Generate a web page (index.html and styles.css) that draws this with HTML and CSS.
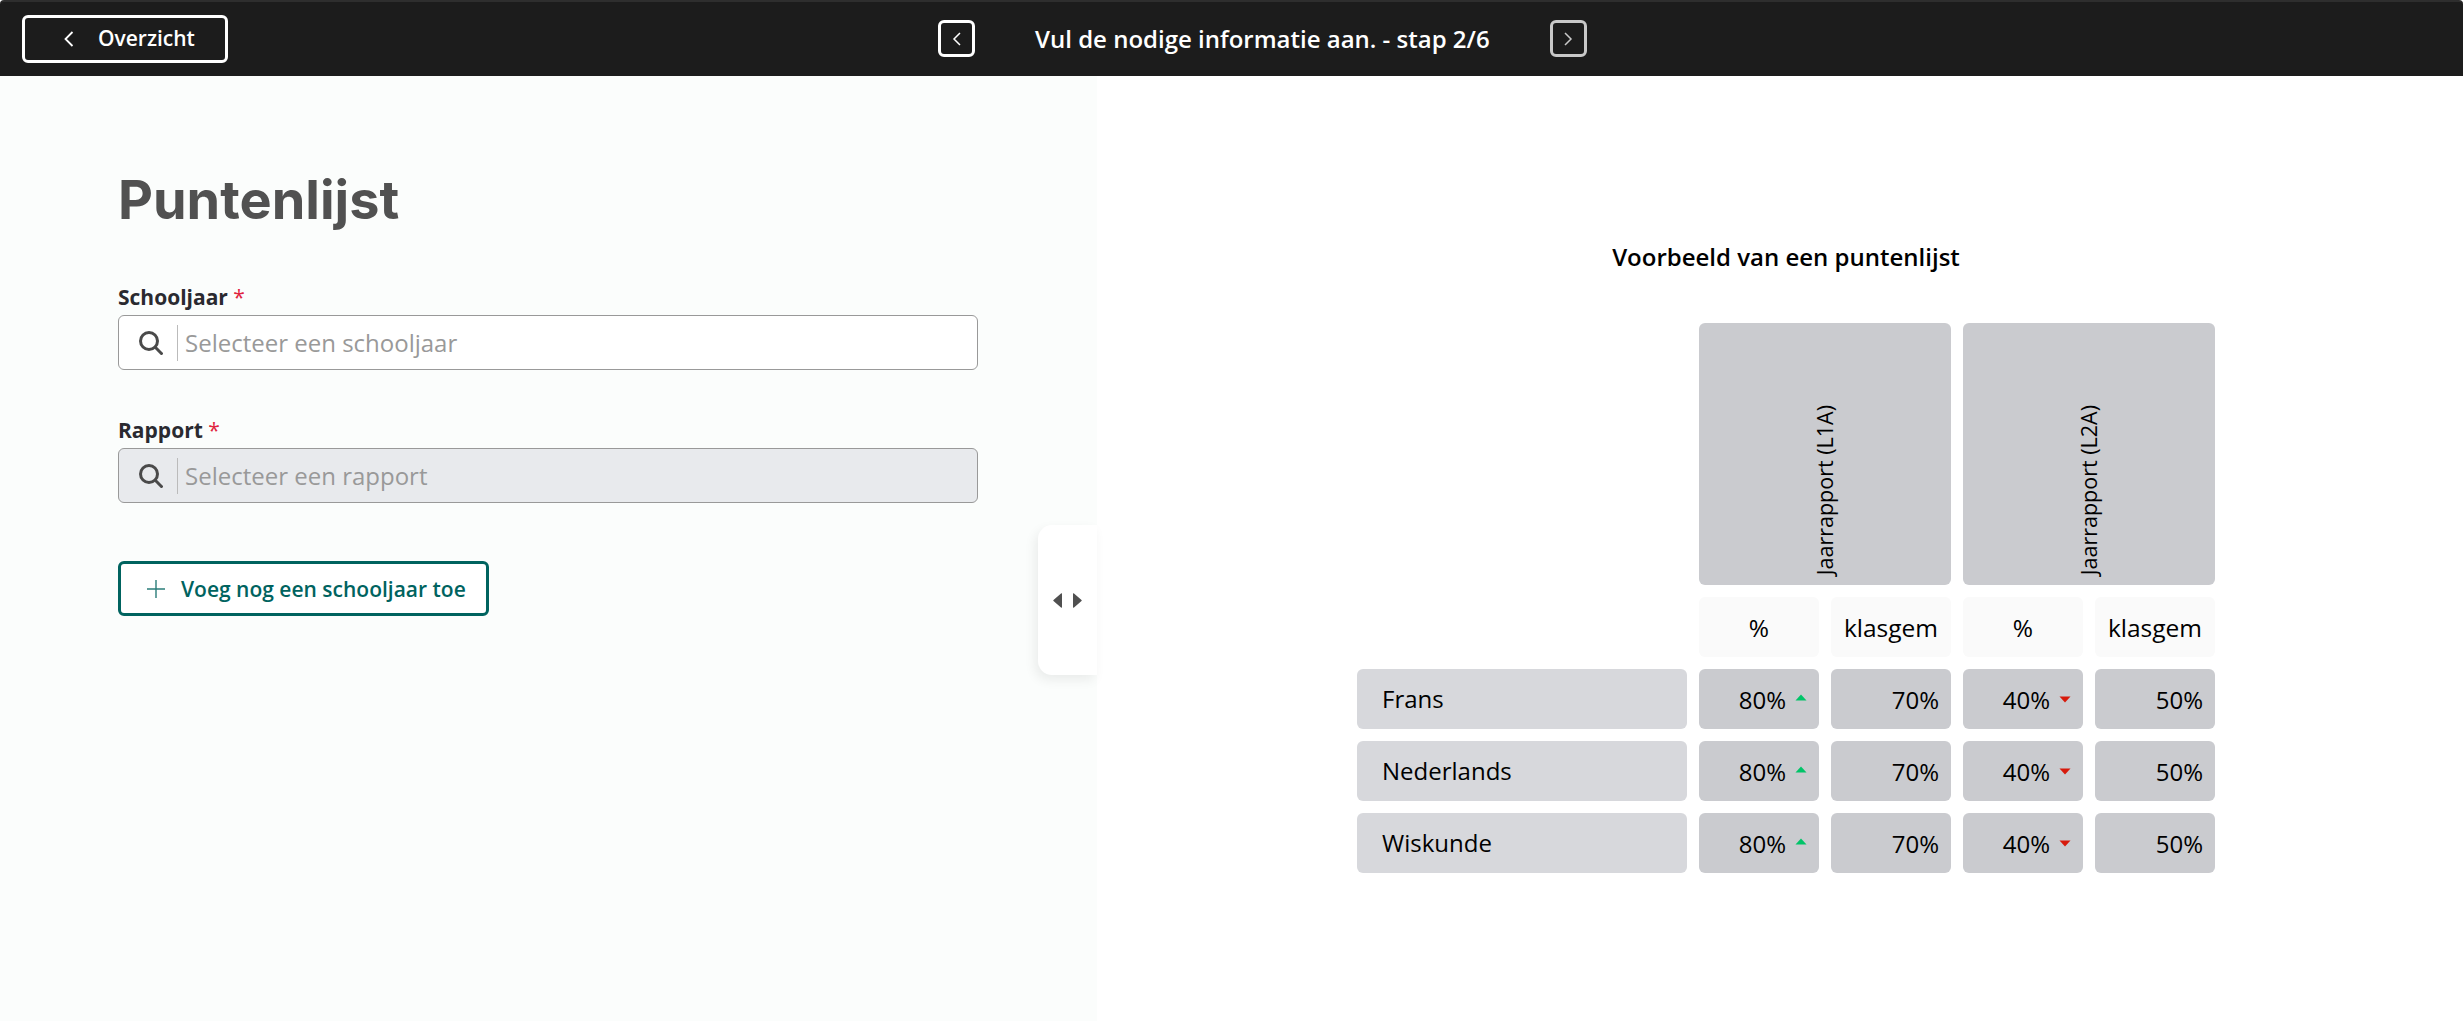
FILE: index.html
```html
<!DOCTYPE html>
<html lang="nl">
<head>
<meta charset="utf-8">
<title>Puntenlijst</title>
<link rel="stylesheet" href="styles.css">
</head>
<body>
<header class="topbar">
  <button class="back-btn">
    <svg class="chev" viewBox="0 0 10 16"><path d="M8.500 1 1.500 8l7 7"/></svg>
    <span>Overzicht</span>
  </button>
  <nav class="stepper">
    <button class="step-btn"><svg class="chev-sm" viewBox="0 0 10 16"><path d="M8 2 2 8l6 6"/></svg></button>
    <span class="step-title">Vul de nodige informatie aan. - stap 2/6</span>
    <button class="step-btn muted"><svg class="chev-sm" viewBox="0 0 10 16"><path d="M2 2l6 6-6 6"/></svg></button>
  </nav>
</header>
<main class="split">
  <section class="form-pane">
    <h1 class="title">Puntenlijst</h1>
    <div class="field">
      <label class="label">Schooljaar <span class="req">*</span></label>
      <div class="select">
        <svg class="search" viewBox="0 0 24 24"><circle cx="10" cy="10" r="8.500"/><path d="M16.500 16.500l7 7"/></svg>
        <span class="placeholder">Selecteer een schooljaar</span>
      </div>
    </div>
    <div class="field">
      <label class="label">Rapport <span class="req">*</span></label>
      <div class="select disabled">
        <svg class="search" viewBox="0 0 24 24"><circle cx="10" cy="10" r="8.500"/><path d="M16.500 16.500l7 7"/></svg>
        <span class="placeholder">Selecteer een rapport</span>
      </div>
    </div>
    <button class="add-btn">
      <svg class="plus" viewBox="0 0 18 18"><path d="M9 0v18M0 9h18"/></svg>
      <span>Voeg nog een schooljaar toe</span>
    </button>
    <div class="handle">
      <svg class="handle-arrows" viewBox="0 0 29 15"><path d="M9 .8v13.400a.6.6 0 0 1-1 .4L.5 8a.7.7 0 0 1 0-1L8 .4a.6.6 0 0 1 1 .4ZM20 .8v13.400a.6.6 0 0 0 1 .4L28.500 8a.7.7 0 0 0 0-1L21 .4a.6.6 0 0 0-1 .4Z"/></svg>
    </div>
  </section>
  <section class="preview-pane">
    <h2 class="preview-title">Voorbeeld van een puntenlijst</h2>
    <div class="grid">
      <div class="blank"></div>
      <div class="cell report"><span>Jaarrapport (L1A)</span></div>
      <div class="cell report"><span>Jaarrapport (L2A)</span></div>

      <div class="blank"></div>
      <div class="cell head">%</div>
      <div class="cell head">klasgem</div>
      <div class="cell head">%</div>
      <div class="cell head">klasgem</div>

      <div class="cell name">Frans</div>
      <div class="cell val">80%<svg class="tri up" viewBox="0 0 12 7"><path d="M6 .6 11.500 6.400H.5Z"/></svg></div>
      <div class="cell val">70%</div>
      <div class="cell val">40%<svg class="tri down" viewBox="0 0 12 7"><path d="M.5.6h11L6 6.400Z"/></svg></div>
      <div class="cell val">50%</div>

      <div class="cell name">Nederlands</div>
      <div class="cell val">80%<svg class="tri up" viewBox="0 0 12 7"><path d="M6 .6 11.500 6.400H.5Z"/></svg></div>
      <div class="cell val">70%</div>
      <div class="cell val">40%<svg class="tri down" viewBox="0 0 12 7"><path d="M.5.6h11L6 6.400Z"/></svg></div>
      <div class="cell val">50%</div>

      <div class="cell name">Wiskunde</div>
      <div class="cell val">80%<svg class="tri up" viewBox="0 0 12 7"><path d="M6 .6 11.500 6.400H.5Z"/></svg></div>
      <div class="cell val">70%</div>
      <div class="cell val">40%<svg class="tri down" viewBox="0 0 12 7"><path d="M.5.6h11L6 6.400Z"/></svg></div>
      <div class="cell val">50%</div>
    </div>
  </section>
</main>
</body>
</html>
```
FILE: styles.css
```css
* { box-sizing: border-box; }
html, body { margin: 0; height: 100%; }
body {
  font-family: "Open Sans", sans-serif;
  color: #000;
  background: #fff;
  display: flex;
  flex-direction: column;
  height: 1021px;
  overflow: hidden;
}
button { font-family: inherit; background: none; cursor: pointer; padding: 0; }

.topbar {
  height: 76px;
  flex: none;
  background: #1c1c1c;
  border-top: 2px solid #2e2e2e;
  position: relative;
  display: flex;
  align-items: center;
  padding-left: 22px;
  border-radius: 4px 4px 0 0;
}
.back-btn {
  width: 206px;
  height: 48px;
  margin-top: -1px;
  border: 3px solid #fff;
  border-radius: 6px;
  color: #fff;
  font-size: 21px;
  font-weight: 600;
  display: flex;
  align-items: center;
  padding: 0 0 2px 39px;
  gap: 24px;
}
.chev { width: 10px; height: 16px; fill: none; stroke: #fff; stroke-width: 1.8; margin-top: 2px; }
.stepper {
  position: absolute;
  left: 938px;
  top: 18px;
  display: flex;
  align-items: center;
  gap: 60px;
}
.step-btn {
  width: 37px;
  height: 37px;
  border: 3px solid #fff;
  border-radius: 6px;
  display: flex;
  align-items: center;
  justify-content: center;
}
.step-btn.muted { border-color: #c8c8c8; }
.chev-sm { width: 10px; height: 16px; fill: none; stroke: #fff; stroke-width: 1.5; }
.muted .chev-sm { stroke: #c8c8c8; }
.step-title { color: #fff; font-size: 24px; font-weight: 600; white-space: nowrap; }

.split { flex: 1; display: flex; min-height: 0; }
.form-pane {
  width: 1097px;
  flex: none;
  background: #fbfdfc;
  padding: 92px 119px 0 118px;
  position: relative;
}
.title {
  margin: 0 0 51px;
  font-family: Inter, sans-serif;
  font-size: 54px;
  font-weight: 700;
  line-height: 64px;
  color: #515151;
}
.field { margin-bottom: 46px; }
.label {
  display: block;
  font-size: 21px;
  font-weight: 700;
  line-height: 28px;
  color: #2a2a30;
  margin-bottom: 4px;
}
.req { color: #e0243f; font-weight: 400; }
.select {
  height: 55px;
  border: 1px solid #999;
  border-radius: 6px;
  background: #fff;
  display: flex;
  align-items: center;
  padding-left: 20px;
}
.select.disabled { background: #e8eaed; }
.search { width: 24px; height: 24px; fill: none; stroke: #4a4a4a; stroke-width: 3; flex: none; }
.placeholder {
  margin-left: 14px;
  border-left: 1px solid #bbb;
  padding-left: 7px;
  height: 36px;
  line-height: 35px;
  font-size: 24px;
  color: #999;
}
.add-btn {
  margin-top: 58px;
  width: 371px;
  height: 55px;
  border: 3px solid #00635f;
  border-radius: 6px;
  background: #fff;
  color: #00635f;
  font-size: 21px;
  font-weight: 600;
  display: flex;
  align-items: center;
  padding-left: 26px;
  gap: 16px;
}
.plus { width: 18px; height: 18px; fill: none; stroke: #2b7d79; stroke-width: 1.4; }
.handle {
  position: absolute;
  right: 0;
  top: 449px;
  width: 59px;
  height: 150px;
  background: #fff;
  border-radius: 14px 0 0 14px;
  box-shadow: -3px 5px 12px rgba(0,0,0,.07);
  display: flex;
  align-items: center;
  justify-content: center;
}
.handle-arrows { width: 29px; height: 15px; fill: #505050; margin-left: -1px; }

.preview-pane {
  flex: 1;
  display: flex;
  flex-direction: column;
  padding: 165px 0 0 260px;
}
.preview-title {
  width: 858px;
  margin: 0 0 50px;
  text-align: center;
  font-size: 24px;
  font-weight: 600;
  line-height: 32px;
}
.grid {
  display: grid;
  grid-template-columns: 330px 120px 120px 120px 120px;
  grid-template-rows: 262px 60px 60px 60px 60px;
  gap: 12px;
  width: 858px;
  font-size: 24px;
}
.cell { border-radius: 6px; display: flex; align-items: center; background: #cacbcf; }
.report {
  grid-column: span 2;
  align-items: flex-end;
  justify-content: center;
  padding-bottom: 10px;
}
.report span {
  writing-mode: vertical-rl;
  transform: rotate(180deg);
  font-size: 21.500px;
  line-height: 24px;
}
.head { background: #fafafa; justify-content: center; font-size: 24.500px; }
.name { background: #d7d8dc; padding: 0 0 2px 25px; }
.val { justify-content: flex-end; padding-right: 12px; gap: 9px; }
.tri { width: 12px; height: 7px; flex: none; }
.tri.up { fill: #00c468; margin-top: -3px; }
.tri.down { fill: #d71a0c; margin-top: 1px; }
```
